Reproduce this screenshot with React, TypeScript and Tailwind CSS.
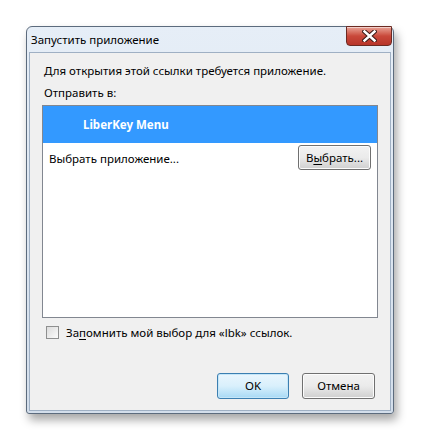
const font = { fontFamily: '"Segoe UI", "Noto Sans", "Open Sans", sans-serif' };

function CloseButton() {
  return (
    <div className="absolute right-[1px] top-[-1px] flex h-[20px] w-[46px] items-center justify-center rounded-b-[4px] border border-[#6b2a22] bg-gradient-to-b from-[#e8a397] via-[#c9483a] to-[#b7352a] shadow-[inset_0_1px_0_rgba(255,255,255,0.5)]">
      <svg width="15" height="12" viewBox="0 0 15 12">
        <path d="M2.5 1.5 L12.5 10.5 M12.5 1.5 L2.5 10.5" stroke="#3a1a16" strokeWidth="4.5" strokeLinecap="square" />
        <path d="M2.5 1.5 L12.5 10.5 M12.5 1.5 L2.5 10.5" stroke="#ffffff" strokeWidth="2.5" strokeLinecap="square" />
      </svg>
    </div>
  );
}

function WinButton({ children, focused }: { children: React.ReactNode; focused?: boolean }) {
  return (
    <button
      type="button"
      className={[
        'flex items-center justify-center rounded-[3px] border text-[11.5px] text-black',
        focused
          ? 'border-[#3c7fb1] bg-gradient-to-b from-[#eaf6fd] via-[#d9f0fc] to-[#a7d9f5] shadow-[inset_0_0_0_1px_#c5e6f8]'
          : 'border-[#707070] bg-gradient-to-b from-[#f2f2f2] via-[#ebebeb] to-[#cfcfcf] shadow-[inset_0_0_0_1px_#fcfcfc]',
      ].join(' ')}
    >
      {children}
    </button>
  );
}

export default function App() {
  return (
    <div className="h-[442px] w-[421px] bg-white pl-[26px] pt-[26px]" style={font}>
      <div className="relative flex h-[388px] w-[368px] flex-col rounded-t-[6px] rounded-b-[3px] border border-[#5c6b7d] bg-gradient-to-b from-[#e6eef7] to-[#d3deeb] shadow-[3px_6px_10px_rgba(0,0,0,0.35)]">
        <div className="relative flex h-[25px] items-center pl-[4px] text-[11.5px] text-black">
          Запустить приложение
          <CloseButton />
        </div>
        <div className="mx-[2px] mb-[2px] flex flex-1 flex-col border border-[#9fb0c4] bg-[#f0f0f0] px-[12px] pt-[8px] text-[11.5px] text-black">
          <div className="pl-[2px] leading-[20px]">Для открытия этой ссылки требуется приложение.</div>
          <div className="mt-[2px] pl-[2px] leading-[20px]">Отправить в:</div>
          <div className="mt-[2px] h-[213px] border border-[#828790] bg-white">
            <div className="flex h-[37px] items-center bg-[#3399ff] pl-[40px] font-bold text-white">LiberKey Menu</div>
            <div className="flex h-[29px] items-center justify-between pl-[6px] pr-[6px]">
              <span className="pt-[2px]">Выбрать приложение...</span>
              <WinButton>
                <span className="flex h-[23px] w-[71px] items-center justify-center">
                  В<span className="underline underline-offset-2">ы</span>брать...
                </span>
              </WinButton>
            </div>
          </div>
          <div className="mt-[6px] flex items-center pl-[4px]">
            <span className="mr-[7px] h-[13px] w-[13px] border border-[#8e8f8f] bg-gradient-to-br from-[#dcdcdc] to-[#fbfbfb]" />
            <span>
              За<span className="underline underline-offset-2">п</span>омнить мой выбор для «lbk» ссылок.
            </span>
          </div>
          <div className="mt-auto mb-[11px] flex justify-end gap-[13px] pr-[3px]">
            <WinButton focused>
              <span className="flex h-[24px] w-[70px] items-center justify-center">OK</span>
            </WinButton>
            <WinButton>
              <span className="flex h-[24px] w-[71px] items-center justify-center">Отмена</span>
            </WinButton>
          </div>
        </div>
      </div>
    </div>
  );
}
